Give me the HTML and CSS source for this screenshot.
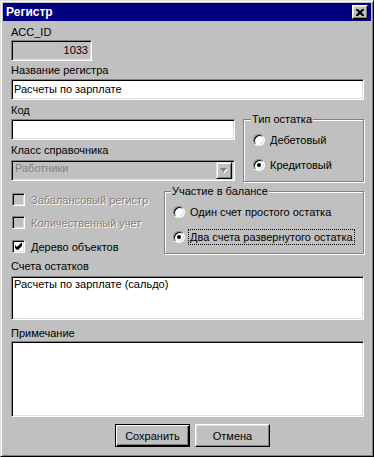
FILE: index.html
```html
<!DOCTYPE html>
<html lang="ru">
<head>
  <meta charset="UTF-8">
  <title>Регистр</title>
  <link rel="stylesheet" href="styles.css">
</head>
<body>
  <div class="window">
    <div class="titlebar">
      <span class="title">Регистр</span>
      <span class="close-btn">
        <svg width="8" height="7" viewBox="0 0 8 7"><path d="M0 0h2l2 2 2-2h2v1l-2.5 2.5 2.5 2.5v1h-2l-2-2-2 2h-2v-1l2.5-2.5-2.5-2.5z" fill="#000"/></svg>
      </span>
    </div>

    <div class="client">
      <label class="cap">ACC_ID</label>
      <div class="edit edit-id">1033</div>

      <label class="cap cap-name">Название регистра</label>
      <div class="edit edit-name">Расчеты по зарплате</div>

      <div class="row">
        <div class="col-main">
          <label class="cap cap-code">Код</label>
          <div class="edit edit-code"></div>
          <label class="cap cap-class">Класс справочника</label>
          <div class="combo">
            <span class="combo-text">Работники</span>
            <span class="drop-btn">
              <svg width="8" height="5" viewBox="0 0 8 5"><path d="M1 1h7l-3.5 4z" fill="#fff"/><path d="M0 0h7l-3.5 4z" fill="#808080"/></svg>
            </span>
          </div>
        </div>

        <fieldset class="group group-type">
          <legend>Тип остатка</legend>
          <div class="radio-row"><span class="radio"></span><span>Дебетовый</span></div>
          <div class="radio-row second"><span class="radio checked"></span><span>Кредитовый</span></div>
        </fieldset>
      </div>

      <div class="row">
        <div class="checks">
          <div class="check-row disabled"><span class="check"></span><span>Забалансовый регистр</span></div>
          <div class="check-row disabled row-2"><span class="check"></span><span>Количественный учет</span></div>
          <div class="check-row row-3">
            <span class="check on">
              <svg width="7" height="7" viewBox="0 0 7 7"><path d="M6 0h1v3l-4 4h-1l-2-2v-3l2 2z" fill="#000"/></svg>
            </span>
            <span>Дерево объектов</span>
          </div>
        </div>

        <fieldset class="group group-balance">
          <legend>Участие в балансе</legend>
          <div class="radio-row"><span class="radio"></span><span>Один счет простого остатка</span></div>
          <div class="radio-row second"><span class="radio checked"></span><span class="focused">Два счета развернутого остатка</span></div>
        </fieldset>
      </div>

      <label class="cap cap-acc">Счета остатков</label>
      <div class="memo memo-acc">Расчеты по зарплате (сальдо)</div>

      <label class="cap cap-note">Примечание</label>
      <div class="memo memo-note"></div>

      <div class="buttons">
        <button class="btn default">Сохранить</button>
        <button class="btn">Отмена</button>
      </div>
    </div>
  </div>
</body>
</html>
```

FILE: styles.css
```css
body { margin: 0; background: #c0c0c0; font: 11px "Liberation Sans", Arial, sans-serif; color: #000; }

/* window frame */
.window { width: 374px; height: 457px; box-sizing: border-box; padding: 2px; background: #c0c0c0; border: 1px solid; border-color: #dfdfdf #000 #000 #dfdfdf; box-shadow: inset 1px 1px #fff, inset -1px -1px #808080; }
.titlebar { height: 18px; background: #000080; display: flex; align-items: center; justify-content: space-between; padding: 0 3px 0 3px; }
.title { color: #fff; font-weight: bold; font-size: 12px; line-height: 14px; }
.close-btn { width: 16px; height: 14px; box-sizing: border-box; background: #c0c0c0; border: 1px solid; border-color: #fff #000 #000 #fff; box-shadow: inset -1px -1px #808080, inset 1px 1px #dfdfdf; display: flex; align-items: center; justify-content: center; }
.close-btn svg { display: block; }

.client { padding: 5px 7px 0 8px; }

/* captions */
.cap { display: block; line-height: 13px; height: 13px; white-space: nowrap; }
.cap-name { margin-top: 3px; }
.cap-code { margin-top: 4px; }
.cap-class { margin-top: 4px; }
.cap-acc { margin-top: 6px; }
.cap-note { margin-top: 7px; }

/* sunken fields */
.edit, .memo, .combo { box-sizing: border-box; border: 1px solid; border-color: #808080 #fff #fff #808080; box-shadow: inset 1px 1px #000, inset -1px -1px #dfdfdf; background: #fff; }
.edit { height: 21px; padding: 3px 2px 0; line-height: 13px; white-space: nowrap; }
.edit-id { width: 81px; margin-top: 1px; background: #c0c0c0; text-align: right; padding-right: 3px; }
.edit-name { margin-top: 2px; }
.edit-code { margin-top: 2px; }

.combo { height: 21px; margin-top: 3px; background: #c0c0c0; display: flex; justify-content: space-between; padding: 1px 2px 0 2px; }
.combo-text { color: #808080; line-height: 13px; padding-left: 1px; }
.drop-btn { width: 16px; height: 17px; box-sizing: border-box; border: 1px solid; border-color: #dfdfdf #000 #000 #dfdfdf; box-shadow: inset 1px 1px #fff, inset -1px -1px #808080; display: flex; align-items: center; justify-content: center; }
.drop-btn svg { display: block; }

.memo { padding: 1px 2px 0; line-height: 13px; }
.memo-acc { height: 44px; margin-top: 3px; }
.memo-note { height: 76px; margin-top: 1px; }

/* two-column rows */
.row { display: flex; align-items: flex-start; }
.col-main { width: 224px; }

/* group boxes */
.group { margin: 0 0 0 auto; min-width: 0; border: 1px solid #808080; box-shadow: inset 1px 1px #fff, 1px 1px #fff; }
.group legend { margin-left: -2px; padding: 0 1px; line-height: 13px; background: #c0c0c0; }
.group-type { width: 121px; box-sizing: border-box; margin-top: 13px; padding: 7px 4px 10px 9px; }
.group-balance { width: 200px; box-sizing: border-box; margin-top: 3px; padding: 7px 4px 10px 8px; }

.radio-row { display: flex; align-items: center; height: 13px; white-space: nowrap; }
.radio-row.second { margin-top: 12px; }
.radio { position: relative; width: 12px; height: 12px; box-sizing: border-box; border-radius: 50%; background: #fff; border: 1px solid; border-color: #808080 #fff #fff #808080; box-shadow: inset 1px 1px #000, inset -1px -1px #dfdfdf; margin-right: 5px; flex: none; }
.radio.checked::after { content: ""; position: absolute; left: 3px; top: 3px; width: 4px; height: 4px; border-radius: 50%; background: #000; }
.focused { border: 1px dotted #000; padding: 0 1px; line-height: 14px; margin-left: -2px; }

/* check boxes */
.checks { padding-top: 11px; }
.check-row { display: flex; align-items: center; height: 13px; white-space: nowrap; }
.check-row.row-2 { margin-top: 10px; }
.check-row.row-3 { margin-top: 11px; }
.check { width: 13px; height: 13px; box-sizing: border-box; margin: 0 6px 0 1px; border: 1px solid; border-color: #808080 #fff #fff #808080; box-shadow: inset 1px 1px #000, inset -1px -1px #dfdfdf; background: #fff; display: flex; align-items: center; justify-content: center; flex: none; }
.check-row.disabled .check { background: #c0c0c0; }
.check-row.disabled span + span { color: #808080; text-shadow: 1px 1px 0 #fff; }

/* buttons */
.buttons { display: flex; gap: 5px; margin: 7px 0 0 104px; }
.btn { width: 75px; height: 23px; box-sizing: border-box; padding: 0; font: 11px "Liberation Sans", Arial, sans-serif; color: #000; background: #c0c0c0; border: 1px solid; border-color: #fff #000 #000 #fff; box-shadow: inset -1px -1px #808080, inset 1px 1px #dfdfdf; }
.btn.default { border-color: #000; box-shadow: inset 1px 1px #fff, inset -1px -1px #000, inset -2px -2px #808080; }
```
